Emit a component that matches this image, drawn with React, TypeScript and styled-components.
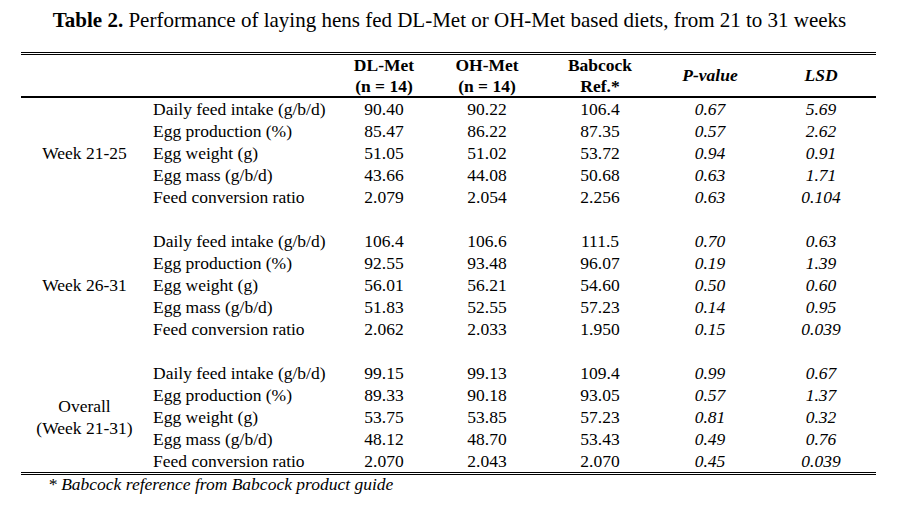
import React from 'react'
import styled, { createGlobalStyle } from 'styled-components'

const GlobalStyle = createGlobalStyle`
    html, body {
        margin: 0;
        padding: 0;
        background: #ffffff;
    }
    body {
        font-family: 'Liberation Serif', 'Times New Roman', serif;
        color: #000000;
    }
`

const Page = styled.div`
    width: 899px;
    height: 509px;
    overflow: hidden;
`

const Title = styled.h1`
    margin: 0;
    height: 40px;
    line-height: 40px;
    font-size: 21px;
    font-weight: normal;
    text-align: center;
    padding-left: 0;

    b {
        font-weight: bold;
    }
`

const Table = styled.table`
    margin: 12px 0 0 21px;
    width: 855px;
    border-collapse: collapse;
    table-layout: fixed;
    font-size: 17.5px;
    border-top: 3px double #000;
    border-bottom: 3px double #000;
`

const HeadRow = styled.tr`
    border-bottom: 2px solid #000;
`

const HeadCell = styled.th<{ $italic?: boolean }>`
    padding: 0;
    height: 41px;
    line-height: 20.5px;
    font-weight: bold;
    font-style: ${({ $italic }) => ($italic ? 'italic' : 'normal')};
    text-align: center;
    vertical-align: middle;
`

const Row = styled.tr`
    height: 22px;
`

const GroupCell = styled.td`
    padding: 0;
    line-height: 22px;
    text-align: center;
    vertical-align: middle;
`

const LabelCell = styled.td`
    padding: 0 0 0 5px;
    line-height: 22px;
    white-space: nowrap;
    text-align: left;
`

const ValueCell = styled.td<{ $italic?: boolean }>`
    padding: 0;
    line-height: 22px;
    text-align: center;
    font-style: ${({ $italic }) => ($italic ? 'italic' : 'normal')};
`

const Footnote = styled.p`
    margin: 0 0 0 48px;
    font-size: 17.5px;
    font-style: italic;
    line-height: 19px;
`

const labels = [
    'Daily feed intake (g/b/d)',
    'Egg production (%)',
    'Egg weight (g)',
    'Egg mass (g/b/d)',
    'Feed conversion ratio',
]

const groups = [
    {
        name: ['Week 21-25'],
        rows: [
            ['90.40', '90.22', '106.4', '0.67', '5.69'],
            ['85.47', '86.22', '87.35', '0.57', '2.62'],
            ['51.05', '51.02', '53.72', '0.94', '0.91'],
            ['43.66', '44.08', '50.68', '0.63', '1.71'],
            ['2.079', '2.054', '2.256', '0.63', '0.104'],
        ],
    },
    {
        name: ['Week 26-31'],
        rows: [
            ['106.4', '106.6', '111.5', '0.70', '0.63'],
            ['92.55', '93.48', '96.07', '0.19', '1.39'],
            ['56.01', '56.21', '54.60', '0.50', '0.60'],
            ['51.83', '52.55', '57.23', '0.14', '0.95'],
            ['2.062', '2.033', '1.950', '0.15', '0.039'],
        ],
    },
    {
        name: ['Overall', '(Week 21-31)'],
        rows: [
            ['99.15', '99.13', '109.4', '0.99', '0.67'],
            ['89.33', '90.18', '93.05', '0.57', '1.37'],
            ['53.75', '53.85', '57.23', '0.81', '0.32'],
            ['48.12', '48.70', '53.43', '0.49', '0.76'],
            ['2.070', '2.043', '2.070', '0.45', '0.039'],
        ],
    },
]

const colWidths = [127, 197, 78, 128, 98, 122, 100, 5]

export default function App() {
    return (
        <Page>
            <GlobalStyle />
            <Title>
                <b>Table 2.</b> Performance of laying hens fed DL-Met or OH-Met based diets, from 21 to 31 weeks
            </Title>
            <Table>
                <colgroup>
                    {colWidths.map((w, i) => (
                        <col key={i} style={{ width: w }} />
                    ))}
                </colgroup>
                <thead>
                    <HeadRow>
                        <HeadCell />
                        <HeadCell />
                        <HeadCell>DL-Met<br />(n = 14)</HeadCell>
                        <HeadCell>OH-Met<br />(n = 14)</HeadCell>
                        <HeadCell>Babcock<br />Ref.*</HeadCell>
                        <HeadCell $italic>P-value</HeadCell>
                        <HeadCell $italic>LSD</HeadCell>
                        <HeadCell />
                    </HeadRow>
                </thead>
                <tbody>
                    {groups.map((g, gi) => (
                        <React.Fragment key={gi}>
                            {gi > 0 && (
                                <Row>
                                    <td colSpan={8} />
                                </Row>
                            )}
                            {g.rows.map((r, ri) => (
                                <Row key={ri}>
                                    {ri === 0 && (
                                        <GroupCell rowSpan={5}>
                                            {g.name.map((n, ni) => (
                                                <div key={ni}>{n}</div>
                                            ))}
                                        </GroupCell>
                                    )}
                                    <LabelCell>{labels[ri]}</LabelCell>
                                    {r.map((v, vi) => (
                                        <ValueCell key={vi} $italic={vi >= 3}>
                                            {v}
                                        </ValueCell>
                                    ))}
                                    <td />
                                </Row>
                            ))}
                        </React.Fragment>
                    ))}
                </tbody>
            </Table>
            <Footnote>* Babcock reference from Babcock product guide</Footnote>
        </Page>
    )
}
